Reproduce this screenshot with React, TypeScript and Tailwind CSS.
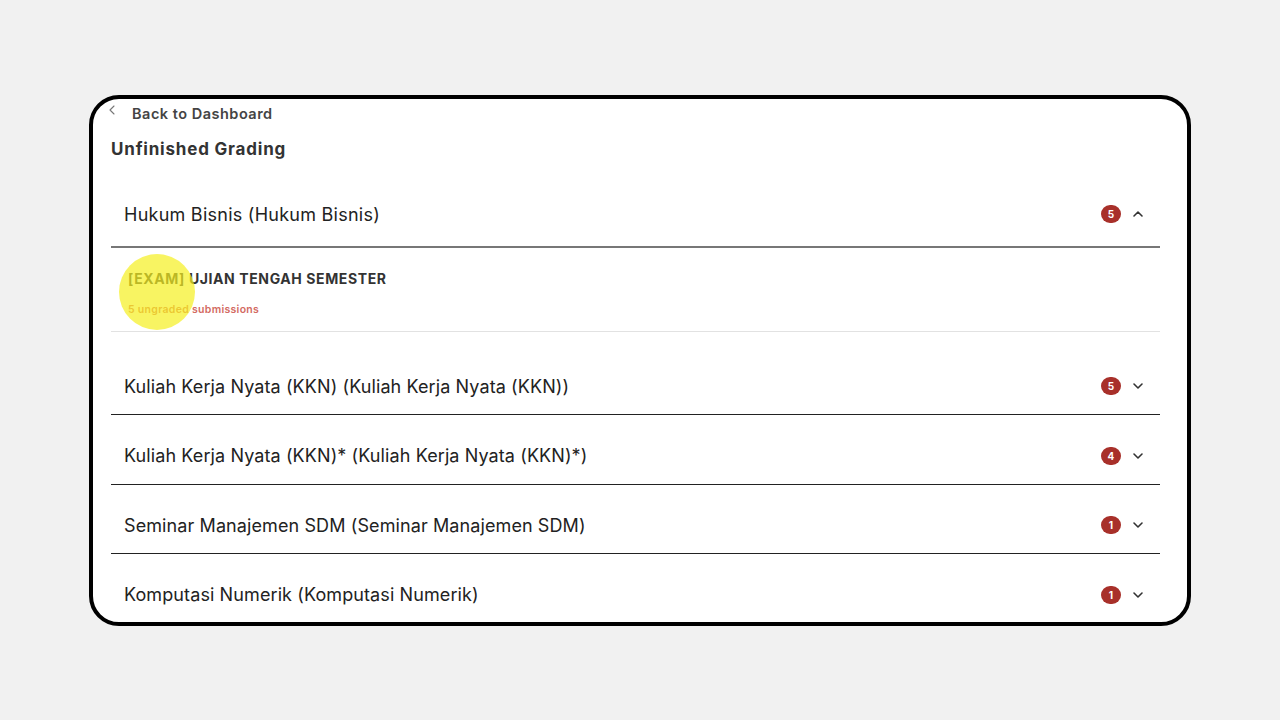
import { ChevronDown, ChevronUp, ChevronLeft } from 'lucide-react';

interface CourseRow {
  name: string;
  count: number;
}

const rows: CourseRow[] = [
  { name: 'Kuliah Kerja Nyata (KKN) (Kuliah Kerja Nyata (KKN))', count: 5 },
  { name: 'Kuliah Kerja Nyata (KKN)* (Kuliah Kerja Nyata (KKN)*)', count: 4 },
  { name: 'Seminar Manajemen SDM (Seminar Manajemen SDM)', count: 1 },
  { name: 'Komputasi Numerik (Komputasi Numerik)', count: 1 },
];

function Badge({ count }: { count: number }) {
  return (
    <span className="flex h-[18px] w-[20px] items-center justify-center rounded-full bg-[#a8302a] text-[10px] font-bold leading-none text-white">
      {count}
    </span>
  );
}

export default function App() {
  return (
    <div
      className="flex h-[720px] w-[1280px] items-start justify-center bg-[#f1f1f1] pt-[95px]"
      style={{ fontFamily: 'Inter, "Noto Sans", sans-serif' }}
    >
      <div className="relative h-[531px] w-[1102px] overflow-hidden rounded-[30px] border-4 border-black bg-white">
        <div className="pl-[18px] pr-[27px]">
          {/* Back link */}
          <div className="flex items-center pt-[4px] text-[#444]">
            <ChevronLeft className="-ml-[7px] h-[16px] w-[16px] -translate-y-[4px] text-[#777]" strokeWidth={1.6} />
            <span className="ml-[12px] text-[14.5px] font-semibold tracking-[0.5px]">Back to Dashboard</span>
          </div>
          <h1 className="mt-[12px] text-[17px] font-bold tracking-[0.8px] text-[#333]">Unfinished Grading</h1>

          {/* Expanded item */}
          <div className="mt-[22px] border-b-2 border-[#777]">
            <div className="flex h-[62px] items-center pl-[13px] pr-[14px] pb-[2px]">
              <span className="flex-1 text-[18px] tracking-[0.25px] text-[#222]">Hukum Bisnis (Hukum Bisnis)</span>
              <Badge count={5} />
              <ChevronUp className="ml-[9px] h-[16px] w-[16px] text-[#333]" strokeWidth={2.4} />
            </div>
          </div>
          <div className="border-b border-[#e2e2e2] pl-[17px] pb-[13px] pt-[20px]">
            <div className="text-[14px] font-bold uppercase tracking-[0.6px] text-[#333]">
              [EXAM] Ujian Tengah Semester
            </div>
            <div className="mt-[13px] text-[10.5px] font-semibold tracking-[0.3px] text-[#d36a62]">5 ungraded submissions</div>
          </div>

          {/* Collapsed items */}
          {rows.map((row, i) => (
            <div key={row.name} className={i === 0 ? 'mt-[26px] border-b border-[#222]' : 'mt-[12.5px] border-b border-[#222]'}>
              <div className="flex h-[56px] items-center pl-[13px] pr-[14px]">
                <span className="flex-1 text-[18px] tracking-[0.1px] text-[#222]">{row.name}</span>
                <Badge count={row.count} />
                <ChevronDown className="ml-[9px] h-[16px] w-[16px] text-[#333]" strokeWidth={2.4} />
              </div>
            </div>
          ))}
        </div>

        {/* cursor highlight */}
        <div className="absolute left-[26px] top-[155px] h-[76px] w-[76px] rounded-full bg-[#f5f020]/70" />
      </div>
    </div>
  );
}
